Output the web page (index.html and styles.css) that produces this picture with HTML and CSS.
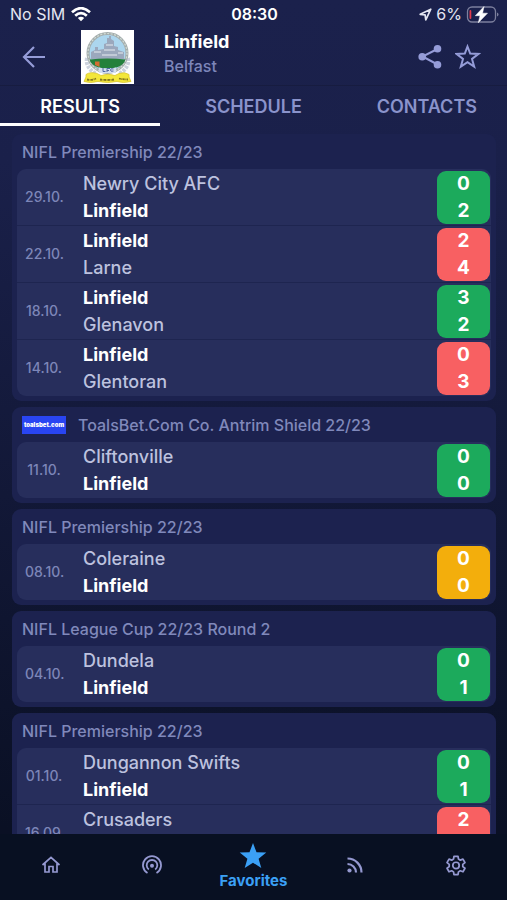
FILE: index.html
```html
<!DOCTYPE html>
<html lang="en">
<head>
<meta charset="utf-8">
<meta name="viewport" content="width=device-width, initial-scale=1">
<title>Linfield</title>
<link rel="stylesheet" href="styles.css">
</head>
<body>
<div class="status">
  <div class="status-left">
    <span>No SIM</span>
    <svg width="20" height="15" viewBox="0 0 20 15" fill="none" stroke="#fff" stroke-width="2.700"><path d="M1 5.200Q10-2.800 19 5.200"/><path d="M4.200 8.700Q10 3.400 15.800 8.700"/><path d="M10 14.300 6.800 11Q10 8.400 13.200 11Z" fill="#fff" stroke="none"/></svg>
  </div>
  <span class="clock">08:30</span>
  <div class="status-right">
    <svg width="13" height="13" viewBox="0 0 13 13" fill="none" stroke="#e4e6f2" stroke-width="1.700" stroke-linejoin="round"><path d="M11.800 1.200 1.200 6.300l4.900.6.700 4.900Z"/></svg>
    <span>6%</span>
    <svg width="33" height="17" viewBox="0 0 33 17"><rect x="1.500" y="1" width="28" height="15" rx="4.500" fill="none" stroke="#7c7f9d" stroke-width="1.300"/><rect x="3.500" y="4" width="1.800" height="9" rx=".9" fill="#e3394b"/><path d="M31 6.500v4q1.500-.6 1.500-2t-1.500-2Z" fill="#7c7f9d"/><path d="M18 .5 9.300 9.700h4.700L12.300 16.800 21.500 7.200h-4.900Z" fill="#fff" stroke="#fff" stroke-width=".5" stroke-linejoin="round"/></svg>
  </div>
</div>
<header class="team-bar">
  <button class="icon-button back" aria-label="Back"><svg width="24" height="24" viewBox="0 0 24 24" fill="none" stroke="#959cd8" stroke-width="2.200"><path d="M23 12H2.500M12 2 2 12l10 10"/></svg></button>
  <svg class="crest" width="53" height="54" viewBox="0 0 53 54">
    <path fill="#fff" d="M0 0h53v54H0z"/>
    <path d="M6 28q-2 9 9 16M47 28q2 9-9 16" stroke="#ccd2dd" stroke-width="4" stroke-dasharray="3 1" fill="none"/>
    <circle cx="26.500" cy="23" r="19.500" fill="#acd6ee" stroke="#a4adad" stroke-width="3"/>
    <circle cx="26.500" cy="23" r="19.500" fill="none" stroke="#d2dcd4" stroke-width="1.200" stroke-dasharray="2 1.500"/>
    <path d="M10 29v-7l4-2v-3h3v3l6-1v-5l3-1V8h2v-2h2v3l3 2v5l4 1v3l6 2v7Z" fill="#9ba8bd"/>
    <path d="M13 22h7m3-2h11m-9-5h7m5 8h5M21 25h15" stroke="#ced5e0" stroke-width="1.500"/>
    <path d="M8.500 29.500q18-2 36 0-3 9-18 9t-18-9Z" fill="#24803c"/>
    <path d="M14 31.500h4.500V37L14 35Z" fill="#d46d32"/>
    <path d="M18 37.500q8.500 2 17 0V43H18Z" fill="#d4dff0"/>
    <path d="M22 38v3.500h2.500m1.500.5v-3.500h3m-3 2h2m4.500-1.500q-3-1-3 1t3 1" stroke="#5267a5" fill="none"/>
    <path d="M5 44.500q4-3 11-1l4 2q7-2.500 14 0l4-2q6-2 10 1v2.500l2 4.500q-8 2-14 0-9 2-19 0-8 2-14 0l2-4.500Z" fill="#f3e73a" stroke="#d9c52e" stroke-width=".8"/>
    <path d="M6 49.500q5 1 9-1m4 1q7 1 14 0m5-1q4 1 9 1" stroke="#85781f" stroke-width="1.800" stroke-dasharray="2 .6 1 .4" fill="none"/>
  </svg>
  <div class="team-info"><h1>Linfield</h1><p>Belfast</p></div>
  <div class="actions">
    <button class="icon-button" aria-label="Share"><svg width="26" height="26" viewBox="0 0 26 26" fill="#959cd8"><path d="M20.500 5 5.500 12.500l15 8" fill="none" stroke="#959cd8" stroke-width="2"/><circle cx="20.500" cy="4.700" r="3.800"/><circle cx="5.200" cy="12.700" r="3.800"/><circle cx="20.500" cy="20.700" r="3.800"/></svg></button>
    <button class="icon-button" aria-label="Add to favorites"><svg width="26" height="26" viewBox="0 0 26 26" fill="none" stroke="#959cd8" stroke-width="2"><path d="m12.500 2.500 2.700 7.100 8.300.3-6.500 5 2.200 7.800-6.700-4.500-6.700 4.500L8 14.900l-6.500-5 8.300-.3Z"/></svg></button>
  </div>
</header>
<nav class="tabs" aria-label="Team">
  <a class="tab active" href="#results" aria-current="page">RESULTS</a>
  <a class="tab" href="#schedule">SCHEDULE</a>
  <a class="tab" href="#contacts">CONTACTS</a>
</nav>
<main class="results" id="results">
  <section class="card">
    <h2>NIFL Premiership 22/23</h2>
    <ul class="matches">
      <li class="match"><time>29.10.</time><div class="teams"><span>Newry City AFC</span><b>Linfield</b></div><div class="score win"><span>0</span><span>2</span></div></li>
      <li class="match"><time>22.10.</time><div class="teams"><b>Linfield</b><span>Larne</span></div><div class="score loss"><span>2</span><span>4</span></div></li>
      <li class="match"><time>18.10.</time><div class="teams"><b>Linfield</b><span>Glenavon</span></div><div class="score win"><span>3</span><span>2</span></div></li>
      <li class="match"><time>14.10.</time><div class="teams"><b>Linfield</b><span>Glentoran</span></div><div class="score loss"><span>0</span><span>3</span></div></li>
    </ul>
  </section>
  <section class="card">
    <h2><span class="sponsor">toalsbet.com</span>ToalsBet.Com Co. Antrim Shield 22/23</h2>
    <ul class="matches">
      <li class="match"><time>11.10.</time><div class="teams"><span>Cliftonville</span><b>Linfield</b></div><div class="score win"><span>0</span><span>0</span></div></li>
    </ul>
  </section>
  <section class="card">
    <h2>NIFL Premiership 22/23</h2>
    <ul class="matches">
      <li class="match"><time>08.10.</time><div class="teams"><span>Coleraine</span><b>Linfield</b></div><div class="score draw"><span>0</span><span>0</span></div></li>
    </ul>
  </section>
  <section class="card">
    <h2>NIFL League Cup 22/23 Round 2</h2>
    <ul class="matches">
      <li class="match"><time>04.10.</time><div class="teams"><span>Dundela</span><b>Linfield</b></div><div class="score win"><span>0</span><span>1</span></div></li>
    </ul>
  </section>
  <section class="card">
    <h2>NIFL Premiership 22/23</h2>
    <ul class="matches">
      <li class="match"><time>01.10.</time><div class="teams"><span>Dungannon Swifts</span><b>Linfield</b></div><div class="score win"><span>0</span><span>1</span></div></li>
      <li class="match"><time>16.09.</time><div class="teams"><span>Crusaders</span><b>Linfield</b></div><div class="score loss"><span>2</span><span>0</span></div></li>
    </ul>
  </section>
</main>
<nav class="bottom-nav" aria-label="Main">
  <a href="#home" aria-label="Home"><svg width="20" height="20" viewBox="0 0 20 20" fill="none" stroke="#9599d1" stroke-width="1.700"><path d="M1.500 10 10 2.300l8.500 7.700M4 8.500V17h4v-5.500h4V17h4V8.500"/></svg></a>
  <a href="#live" aria-label="Live"><svg width="20" height="20" viewBox="0 0 20 20" fill="none" stroke="#9599d1" stroke-width="1.800"><path d="M5.500 18A9 9 0 1 1 14.500 18M6.800 14.500A5.300 5.300 0 1 1 13.200 14.500"/><circle cx="10" cy="10.700" r="2" fill="#9599d1" stroke="none"/></svg></a>
  <a class="current" href="#favorites" aria-current="page"><svg width="28" height="26" viewBox="0 0 28 26" fill="#3ba0f5"><path d="m14 0 3.500 9.200 9.800.4-7.700 6.100 2.700 9.400-8.300-5.400-8.300 5.400 2.700-9.400L.7 9.600l9.800-.4Z"/></svg><span>Favorites</span></a>
  <a href="#news" aria-label="News"><svg width="18" height="18" viewBox="0 0 18 18" fill="none" stroke="#9599d1" stroke-width="2.200"><path d="M1.500 2.500a14 14 0 0 1 14 14M1.500 8a8.500 8.500 0 0 1 8.500 8.500"/><circle cx="3.500" cy="14.500" r="2.100" fill="#9599d1" stroke="none"/></svg></a>
  <a href="#settings" aria-label="Settings"><svg width="22" height="22" viewBox="0 0 24 24" fill="none" stroke="#9599d1" stroke-width="1.900" stroke-linejoin="round"><path d="m9.800 2.500-.5 3-2 1.200-2.900-1.100-2.200 3.800 2.400 1.900v2.400l-2.400 1.900 2.200 3.800 2.900-1.100 2 1.200.5 3h4.400l.5-3 2-1.200 2.900 1.100 2.200-3.800-2.400-1.900v-2.400l2.400-1.900-2.200-3.800-2.900 1.100-2-1.200-.5-3Z"/><circle cx="12" cy="12.500" r="3.500"/></svg></a>
</nav>
</body>
</html>
```
FILE: styles.css
```css
* {
  box-sizing: border-box;
}

body {
  margin: 0;
  height: 100vh;
  display: flex;
  flex-direction: column;
  background: linear-gradient(#1b214c 0, #1a204a 18%, #0a1024 92%);
  color: #fff;
  font-family: Inter, "Liberation Sans", sans-serif;
}

h1, h2, p, ul {
  margin: 0;
  padding: 0;
}

a {
  color: inherit;
  text-decoration: none;
}

svg {
  display: block;
  flex: none;
}

.status {
  height: 28px;
  padding: 0 8px 0 10px;
  display: grid;
  grid-template-columns: 1fr auto 1fr;
  align-items: center;
  font-size: 16px;
  color: #e4e6f2;
}

.status-left, .status-right {
  display: flex;
  align-items: center;
  gap: 6px;
}

.status-right {
  justify-content: flex-end;
  gap: 4px;
}

.clock {
  color: #fff;
  font-weight: 600;
}

.team-bar {
  height: 58px;
  padding: 0 26px 0 22px;
  display: flex;
  align-items: center;
  border-bottom: 1px solid #171c40;
}

.icon-button {
  padding: 0;
  border: 0;
  background: none;
  cursor: pointer;
}

.crest {
  margin-left: 35px;
}

.team-info {
  flex: 1;
  margin: 0 12px 6px 30px;
}

.team-info h1 {
  font-size: 18px;
  line-height: 24px;
  font-weight: 700;
}

.team-info p {
  font-size: 16px;
  line-height: 24px;
  font-weight: 500;
  color: #7d86ba;
}

.actions {
  display: flex;
  gap: 12px;
}

.tabs {
  height: 40px;
  display: grid;
  grid-template-columns: repeat(3, 1fr);
  gap: 13px;
}

.tab {
  display: flex;
  align-items: center;
  justify-content: center;
  border-top: 3px solid transparent;
  border-bottom: 3px solid transparent;
  font-size: 18px;
  font-weight: 600;
  color: #8a93cb;
}

.tab.active {
  color: #fff;
  border-bottom-color: #fff;
}

.results {
  flex: 1;
  min-height: 0;
  overflow-y: auto;
  scrollbar-width: none;
  padding: 8px 11px 0 12px;
  display: flex;
  flex-direction: column;
  gap: 6px;
}

.card {
  flex: none;
  padding: 0 5px 5px;
  border-radius: 9px;
  background: #1c224f;
}

.card h2 {
  height: 35px;
  padding-left: 5px;
  display: flex;
  align-items: center;
  gap: 12px;
  font-size: 16px;
  font-weight: 500;
  color: #8089bb;
}

.sponsor {
  width: 44px;
  height: 18px;
  display: flex;
  align-items: center;
  justify-content: center;
  background: #2945f2;
  color: #fff;
  font-size: 6px;
  font-weight: 900;
}

.matches {
  list-style: none;
  border-radius: 9px;
  overflow: hidden;
  background: #272e5c;
}

.match {
  height: 56px;
  padding: 0 1px 0 8px;
  display: flex;
  align-items: center;
}

.match + .match {
  height: 57px;
  border-top: 1px solid #1e2550;
}

.match time {
  width: 38px;
  padding-bottom: 2px;
  font-size: 14px;
  font-weight: 500;
  text-align: center;
  color: #7d86b8;
}

.teams {
  flex: 1;
  margin-left: 20px;
  display: grid;
  font-size: 18px;
  line-height: 27px;
  font-weight: 500;
  color: #bdc2df;
}

.teams b {
  font-weight: 700;
  color: #fff;
}

.score {
  width: 53px;
  height: 53px;
  border-radius: 9px;
  display: grid;
  align-content: center;
  text-align: center;
  font-size: 19px;
  line-height: 27px;
  font-weight: 700;
}

.win {
  background: #1caa5c;
}

.loss {
  background: #f86062;
}

.draw {
  background: #f3ae0c;
}

.bottom-nav {
  height: 66px;
  padding-bottom: 4px;
  display: grid;
  grid-template-columns: repeat(5, 1fr);
  background: #081022;
}

.bottom-nav a {
  display: flex;
  flex-direction: column;
  align-items: center;
  justify-content: center;
}

.bottom-nav .current {
  padding-top: 4px;
  gap: 2px;
  color: #3ba0f5;
  font-size: 15px;
  line-height: 20px;
  font-weight: 700;
}
```
